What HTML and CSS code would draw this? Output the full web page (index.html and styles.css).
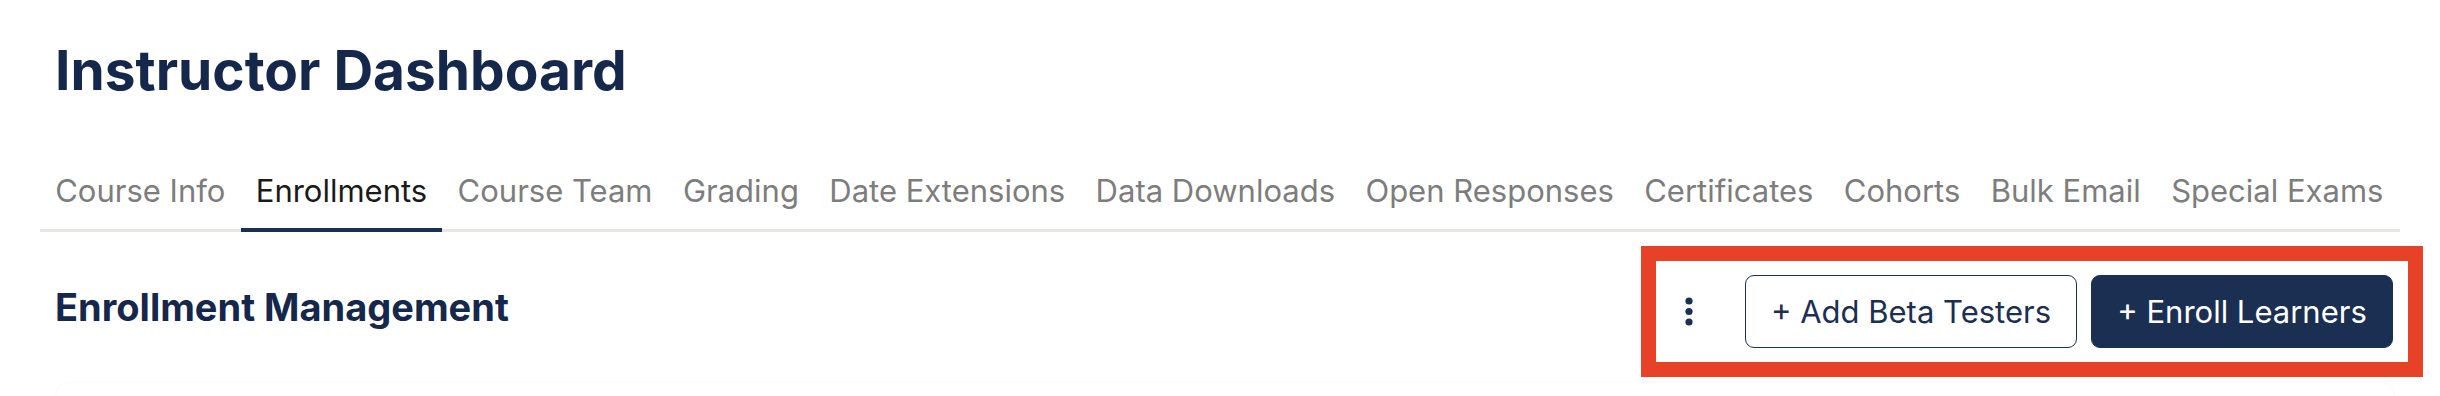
FILE: index.html
```html
<!DOCTYPE html>
<html lang="en">
<head>
    <meta charset="UTF-8">
    <meta name="viewport" content="width=device-width, initial-scale=1.0">
    <title>Instructor Dashboard</title>
    <link rel="stylesheet" href="styles.css">
</head>
<body>
    <div class="page">
        <h1 class="page-title">Instructor Dashboard</h1>

        <nav class="tabs">
            <a class="tab">Course Info</a>
            <a class="tab active">Enrollments</a>
            <a class="tab">Course Team</a>
            <a class="tab">Grading</a>
            <a class="tab">Date Extensions</a>
            <a class="tab">Data Downloads</a>
            <a class="tab">Open Responses</a>
            <a class="tab">Certificates</a>
            <a class="tab">Cohorts</a>
            <a class="tab">Bulk Email</a>
            <a class="tab">Special Exams</a>
        </nav>

        <div class="section-header">
            <h2 class="section-title">Enrollment Management</h2>

            <!-- highlighted action group -->
            <div class="actions">
                <button class="kebab" aria-label="More actions">
                    <svg width="10" height="32" viewBox="0 0 10 32">
                        <circle cx="5" cy="5" r="3.6" fill="#1b2f52"/>
                        <circle cx="5" cy="15.5" r="3.6" fill="#1b2f52"/>
                        <circle cx="5" cy="26" r="3.6" fill="#1b2f52"/>
                    </svg>
                </button>
                <button class="btn btn-outline">+ Add Beta Testers</button>
                <button class="btn btn-primary">+ Enroll Learners</button>
            </div>
        </div>

        <div class="card"></div>
    </div>
</body>
</html>
```

FILE: styles.css
```css
body {
    margin: 0;
    background-color: #fff;
    font-family: 'Inter', 'Noto Sans', sans-serif;
    color: #1a1a1a;
}
.page {
    padding: 37px 40px 0 40px;
}
.page-title {
    margin: 0 0 50px 0;
    padding-left: 15px;
    font-size: 55px;
    line-height: 66px;
    font-weight: 700;
    color: #15284b;
}
.tabs {
    display: flex;
    border-bottom: 3px solid #e9e6e3;
}
.tab {
    flex-shrink: 0;
    white-space: nowrap;
    padding: 15px 15.2px 16px 15.2px;
    font-size: 31px;
    line-height: 45px;
    color: #7d7d7d;
    cursor: pointer;
}
.tab.active {
    color: #1a1a1a;
    border-bottom: 4px solid #1b2f52;
    margin-bottom: -3px;
    padding-bottom: 15px;
}
.section-header {
    display: flex;
    align-items: center;
    justify-content: space-between;
    margin-top: 14px;
}
.section-title {
    margin: 0;
    padding: 0 0 9px 15px;
    font-size: 38px;
    font-weight: 700;
    color: #15284b;
}
.actions {
    display: flex;
    align-items: center;
    gap: 14px;
    padding: 14px 15px 14px 9px;
    margin-right: -23px;
    border: 15px solid #e74127;
}
.kebab {
    width: 48px;
    height: 48px;
    margin-right: 18px;
    padding: 0;
    border: none;
    background: none;
    display: flex;
    align-items: center;
    justify-content: center;
    cursor: pointer;
}
.btn {
    height: 73px;
    padding: 0;
    font-family: 'Inter', 'Noto Sans', sans-serif;
    font-size: 31px;
    white-space: nowrap;
    border-radius: 9px;
    cursor: pointer;
    box-sizing: border-box;
}
.btn-outline {
    width: 332px;
    background-color: #fff;
    color: #1b2f52;
    border: 1.5px solid #1b2f52;
}
.btn-primary {
    width: 302px;
    background-color: #1b2f52;
    color: #fff;
    border: 1.5px solid #1b2f52;
}
.card {
    margin: 5px 5px 0 15px;
    height: 60px;
    border: 1px solid #fafafa;
    border-radius: 14px;
}
```
